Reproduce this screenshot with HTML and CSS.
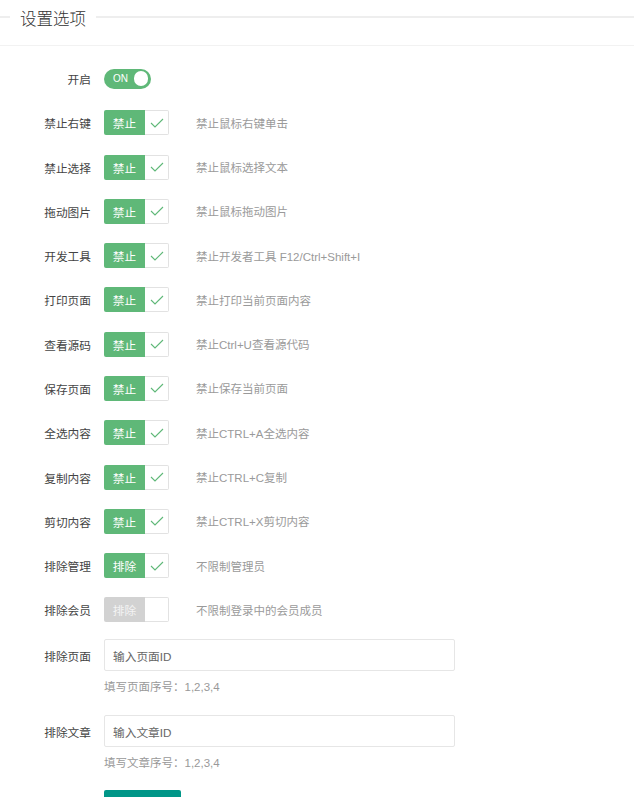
FILE: index.html
```html
<!DOCTYPE html>
<html lang="zh">
<head>
<meta charset="utf-8">
<title>设置选项</title>
<link rel="stylesheet" href="styles.css">
</head>
<body>
<div class="title"><span class="title-text">设置选项</span></div>
<div class="panel">
  <div class="row">
    <div class="label">开启</div>
    <div class="switch"><span class="switch-text">ON</span><span class="knob"></span></div>
  </div>
  <div class="row"><div class="label">禁止右键</div><div class="cb"><span class="cb-text">禁止</span><span class="cb-icon"><svg viewBox="0 0 14 10" width="14" height="10"><path d="M1 5 L5 9 L13 1" fill="none" stroke="#5FB878" stroke-width="1.1"/></svg></span></div><div class="desc">禁止鼠标右键单击</div></div>
  <div class="row"><div class="label">禁止选择</div><div class="cb"><span class="cb-text">禁止</span><span class="cb-icon"><svg viewBox="0 0 14 10" width="14" height="10"><path d="M1 5 L5 9 L13 1" fill="none" stroke="#5FB878" stroke-width="1.1"/></svg></span></div><div class="desc">禁止鼠标选择文本</div></div>
  <div class="row"><div class="label">拖动图片</div><div class="cb"><span class="cb-text">禁止</span><span class="cb-icon"><svg viewBox="0 0 14 10" width="14" height="10"><path d="M1 5 L5 9 L13 1" fill="none" stroke="#5FB878" stroke-width="1.1"/></svg></span></div><div class="desc">禁止鼠标拖动图片</div></div>
  <div class="row"><div class="label">开发工具</div><div class="cb"><span class="cb-text">禁止</span><span class="cb-icon"><svg viewBox="0 0 14 10" width="14" height="10"><path d="M1 5 L5 9 L13 1" fill="none" stroke="#5FB878" stroke-width="1.1"/></svg></span></div><div class="desc">禁止开发者工具 F12/Ctrl+Shift+I</div></div>
  <div class="row"><div class="label">打印页面</div><div class="cb"><span class="cb-text">禁止</span><span class="cb-icon"><svg viewBox="0 0 14 10" width="14" height="10"><path d="M1 5 L5 9 L13 1" fill="none" stroke="#5FB878" stroke-width="1.1"/></svg></span></div><div class="desc">禁止打印当前页面内容</div></div>
  <div class="row"><div class="label">查看源码</div><div class="cb"><span class="cb-text">禁止</span><span class="cb-icon"><svg viewBox="0 0 14 10" width="14" height="10"><path d="M1 5 L5 9 L13 1" fill="none" stroke="#5FB878" stroke-width="1.1"/></svg></span></div><div class="desc">禁止Ctrl+U查看源代码</div></div>
  <div class="row"><div class="label">保存页面</div><div class="cb"><span class="cb-text">禁止</span><span class="cb-icon"><svg viewBox="0 0 14 10" width="14" height="10"><path d="M1 5 L5 9 L13 1" fill="none" stroke="#5FB878" stroke-width="1.1"/></svg></span></div><div class="desc">禁止保存当前页面</div></div>
  <div class="row"><div class="label">全选内容</div><div class="cb"><span class="cb-text">禁止</span><span class="cb-icon"><svg viewBox="0 0 14 10" width="14" height="10"><path d="M1 5 L5 9 L13 1" fill="none" stroke="#5FB878" stroke-width="1.1"/></svg></span></div><div class="desc">禁止CTRL+A全选内容</div></div>
  <div class="row"><div class="label">复制内容</div><div class="cb"><span class="cb-text">禁止</span><span class="cb-icon"><svg viewBox="0 0 14 10" width="14" height="10"><path d="M1 5 L5 9 L13 1" fill="none" stroke="#5FB878" stroke-width="1.1"/></svg></span></div><div class="desc">禁止CTRL+C复制</div></div>
  <div class="row"><div class="label">剪切内容</div><div class="cb"><span class="cb-text">禁止</span><span class="cb-icon"><svg viewBox="0 0 14 10" width="14" height="10"><path d="M1 5 L5 9 L13 1" fill="none" stroke="#5FB878" stroke-width="1.1"/></svg></span></div><div class="desc">禁止CTRL+X剪切内容</div></div>
  <div class="row"><div class="label">排除管理</div><div class="cb"><span class="cb-text">排除</span><span class="cb-icon"><svg viewBox="0 0 14 10" width="14" height="10"><path d="M1 5 L5 9 L13 1" fill="none" stroke="#5FB878" stroke-width="1.1"/></svg></span></div><div class="desc">不限制管理员</div></div>
  <div class="row"><div class="label">排除会员</div><div class="cb cb-off"><span class="cb-text">排除</span><span class="cb-icon"></span></div><div class="desc">不限制登录中的会员成员</div></div>

  <div class="field">
    <div class="input-row"><div class="label">排除页面</div><div class="input">输入页面ID</div></div>
    <div class="help">填写页面序号：1,2,3,4</div>
  </div>
  <div class="field">
    <div class="input-row"><div class="label">排除文章</div><div class="input">输入文章ID</div></div>
    <div class="help">填写文章序号：1,2,3,4</div>
  </div>
  <div class="actions"><div class="btn">保存设置</div></div>
</div>
</body>
</html>
```

FILE: styles.css
```css
* { box-sizing: border-box; }
html, body { margin: 0; padding: 0; background: #fff; }
body {
  font-family: "Liberation Sans", "Noto Sans CJK SC", sans-serif;
  font-size: 12px;
  color: #333;
  overflow: hidden;
}
.title {
  height: 34px;
  display: flex;
  align-items: center;
}
.title::before {
  content: "";
  width: 10px;
  border-top: 2px solid #eeeeee;
}
.title::after {
  content: "";
  flex: 1;
  border-top: 2px solid #eeeeee;
}
.title-text {
  padding: 2px 10px 0;
  font-size: 16.5px;
  color: #333;
  font-family: "Noto Sans CJK SC", sans-serif;
  font-weight: 300;
}
.panel {
  margin-top: 11px;
  border-top: 1px solid #f2f2f2;
  padding-top: 10.5px;
}
.row {
  height: 44.27px;
  display: flex;
  align-items: center;
}
.label {
  width: 91px;
  text-align: right;
  margin-right: 13px;
  color: #444;
  font-size: 11.7px;
  flex: none;
}
.switch {
  width: 47px;
  height: 20px;
  border-radius: 10px;
  background: #5FB878;
  display: flex;
  align-items: center;
  justify-content: space-between;
  padding: 0 3px 0 9px;
}
.switch-text {
  color: #fff;
  font-size: 10px;
}
.knob {
  width: 14.5px;
  height: 14.5px;
  border-radius: 50%;
  background: #fff;
}
.cb {
  width: 65px;
  height: 25px;
  display: flex;
  flex: none;
}
.cb-text {
  width: 41px;
  background: #5FB878;
  color: #fff;
  border-radius: 2px 0 0 2px;
  display: flex;
  align-items: center;
  justify-content: center;
  font-size: 11.7px;
}
.cb-icon {
  flex: 1;
  border: 1px solid #e2e2e2;
  border-left: none;
  border-radius: 0 2px 2px 0;
  display: flex;
  align-items: center;
  justify-content: center;
}
.cb-off .cb-text {
  background: #d2d2d2;
  color: #f4f4f4;
}
.desc {
  margin-left: 27px;
  color: #9a9a9a;
  font-size: 11.5px;
}
.field {
  margin-top: 7.5px;
}
.field + .field {
  margin-top: 18px;
}
.input-row {
  display: flex;
  align-items: center;
}
.input {
  width: 351px;
  height: 32px;
  border: 1px solid #e6e6e6;
  border-radius: 2px;
  padding: 0 8px;
  display: flex;
  align-items: center;
  color: #666;
  font-size: 11.7px;
}
.help {
  margin-left: 104px;
  margin-top: 6px;
  line-height: 20px;
  color: #999;
  font-size: 11.5px;
}
.actions {
  margin-left: 104px;
  margin-top: 17px;
}
.btn {
  width: 77px;
  height: 32px;
  background: #009688;
  color: #fff;
  border-radius: 2px;
  text-align: center;
  padding-top: 10px;
  line-height: 14px;
  font-size: 12px;
}
```
